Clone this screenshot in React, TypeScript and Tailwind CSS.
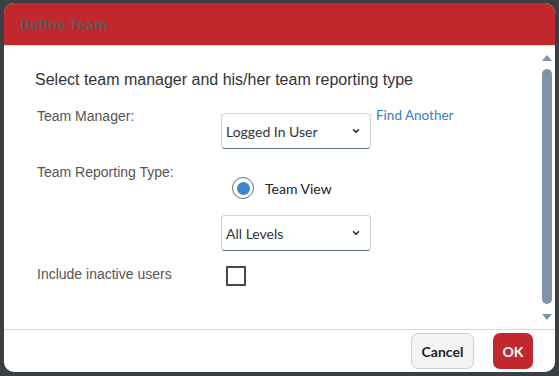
import { ChevronDown } from 'lucide-react';

const Select = ({ value }: { value: string }) => (
  <div className="w-[150px] h-[36px] flex items-center justify-between pl-[4px] pr-[9px] border border-[#d0d4d8] border-b-[#5b6f85] rounded-[4px] bg-white text-[14px] text-[#32363a] font-['Lato',sans-serif]">
    <span>{value}</span>
    <ChevronDown className="w-[10px] h-[10px] text-[#222]" strokeWidth={3.5} />
  </div>
);

export default function App() {
  return (
    <div className="w-[559px] h-[376px] bg-[#3c3f42] pt-[3px] pl-[4px]">
      <div className="w-[551px] h-[369px] bg-white rounded-[10px] overflow-hidden flex flex-col">
        {/* Header */}
        <div className="h-[43px] shrink-0 bg-[#c1272d] flex items-center pl-[16px] border-b border-[#e0e0e0]">
          <span className="text-[14px] font-bold text-[#5c5a5a] font-['Open_Sans',sans-serif]">Define Team</span>
        </div>

        {/* Body */}
        <div className="flex-1 flex min-h-0">
          <div className="flex-1 pt-[24px] font-['Liberation_Sans',Arial,sans-serif]">
            <h2 className="pl-[31px] text-[16px] leading-[20px] text-[#333]">
              Select team manager and his/her team reporting type
            </h2>

            <div className="mt-[18px] pl-[33px] flex">
              <div className="w-[184px] text-[14px] leading-[16px] text-[#555]">Team Manager:</div>
              <div className="flex items-start">
                <div className="mt-[5px]">
                  <Select value="Logged In User" />
                </div>
                <span className="ml-[5px] -mt-[1px] text-[13.5px] leading-[16px] text-[#3a7fc4] font-['Lato',sans-serif]">Find Another</span>
              </div>
            </div>

            <div className="mt-[15px] pl-[33px] flex">
              <div className="w-[184px] text-[14px] leading-[16px] text-[#555]">Team Reporting Type:</div>
              <div className="flex flex-col">
                <div className="mt-[13px] ml-[11px] flex items-center h-[22px]">
                  <div className="w-[22px] h-[22px] rounded-full border-[1.5px] border-[#5b6f85] flex items-center justify-center">
                    <div className="w-[13px] h-[13px] rounded-full bg-[#3b86d1]" />
                  </div>
                  <span className="ml-[11px] text-[14px] text-[#222] font-['Lato',sans-serif]">Team View</span>
                </div>
                <div className="mt-[16px]">
                  <Select value="All Levels" />
                </div>
              </div>
            </div>

            <div className="mt-[15px] pl-[33px] flex">
              <div className="w-[184px] text-[14px] leading-[16px] text-[#555]">Include inactive users</div>
              <div className="ml-[5px] w-[20px] h-[20px] border-2 border-[#4a4a4a]" />
            </div>
          </div>

          {/* Scrollbar */}
          <div className="w-[10px] mr-[3px] flex flex-col items-center pt-[9px] pb-[9px]">
            <div className="w-0 h-0 border-l-[5px] border-r-[5px] border-b-[6px] border-l-transparent border-r-transparent border-b-[#7f93a9]" />
            <div className="mt-[8px] w-[10px] flex-1 rounded-full bg-[#7f93a9]" />
            <div className="mt-[10px] w-0 h-0 border-l-[5px] border-r-[5px] border-t-[6px] border-l-transparent border-r-transparent border-t-[#7f93a9]" />
          </div>
        </div>

        {/* Footer */}
        <div className="h-[43px] shrink-0 border-t border-[#d9d9d9] flex items-center justify-end pr-[22px] gap-[19px] font-['Lato',sans-serif]">
          <button className="w-[63px] h-[36px] rounded-[7px] bg-[#f4f4f4] border border-[#cfcfcf] text-[14px] font-bold text-[#222]">Cancel</button>
          <button className="w-[40px] h-[36px] rounded-[7px] bg-[#c1272d] text-[14px] font-bold text-white">OK</button>
        </div>
      </div>
    </div>
  );
}
